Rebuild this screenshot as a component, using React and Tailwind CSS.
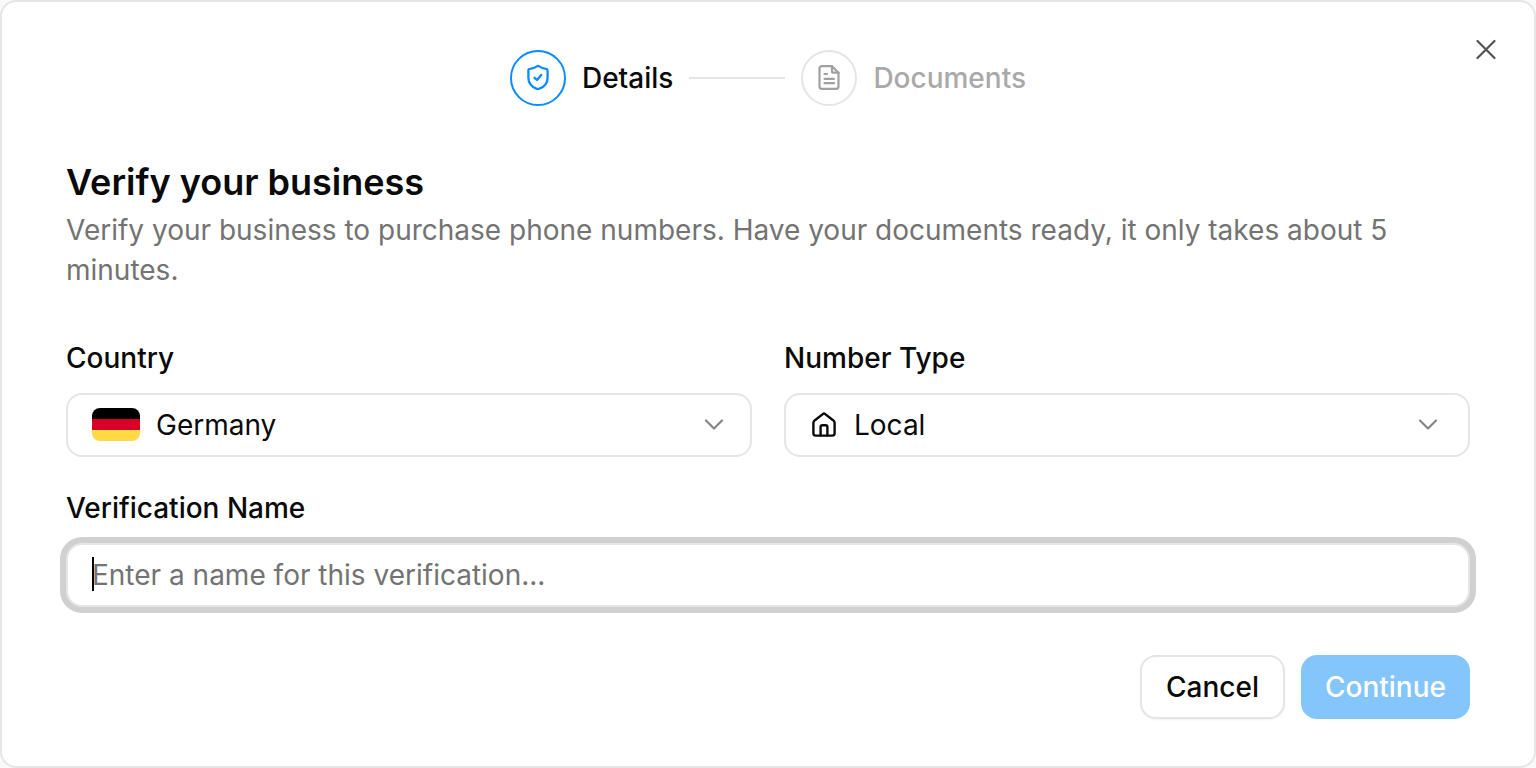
import React from "react";
import clsx from "clsx";

const strokeProps = {
  fill: "none",
  stroke: "currentColor",
  strokeWidth: 2,
  strokeLinecap: "round",
  strokeLinejoin: "round",
  "aria-hidden": true,
};

const ShieldIcon = () => (
  <svg viewBox="0 0 28 28" className="w-7 h-7" {...strokeProps} strokeWidth={2.3}>
    <path d="M12.8 2.4C13.5 1.9 14.5 1.9 15.2 2.4C17 3.7 19 4.5 22 4.9C23 5 23.6 5.6 23.6 6.5V13.4C23.6 19.6 20.2 22.8 15.2 24.8C14.4 25.1 13.6 25.1 12.8 24.8C7.8 22.8 4.4 19.6 4.4 13.4V6.5C4.4 5.6 5 5 6 4.9C9 4.5 11 3.7 12.8 2.4Z" />
    <path d="M10.5 13.8L13 16L17.3 11" />
  </svg>
);

const DocumentIcon = () => (
  <svg viewBox="0 0 28 28" className="w-7 h-7" {...strokeProps} strokeWidth={2.2}>
    <path d="M17 2.2H6.8C5.5 2.2 4.5 3.2 4.5 4.5V22.5C4.5 23.8 5.5 24.8 6.8 24.8H21.2C22.5 24.8 23.5 23.8 23.5 22.5V8.7L17 2.2Z" />
    <path d="M17 2.2V7.2C17 8 17.7 8.7 18.5 8.7H23.5" />
    <path d="M9.5 10H12M9.5 14.8H19M9.5 19.2H19" />
  </svg>
);

const HomeIcon = () => (
  <svg viewBox="0 0 28 28" className="w-7 h-7" {...strokeProps} strokeWidth={2.4}>
    <path d="M3.4 11.7C3.4 10.9 3.7 10.3 4.3 9.8L12.8 3.1C13.5 2.5 14.5 2.5 15.2 3.1L23.7 9.8C24.3 10.3 24.6 10.9 24.6 11.7V22.2C24.6 23.6 23.5 24.6 22.2 24.6H5.8C4.5 24.6 3.4 23.6 3.4 22.2V11.7Z" />
    <path d="M10.6 24.6V16C10.6 15 11.4 14.3 12.3 14.3H15.7C16.6 14.3 17.4 15 17.4 16V24.6" />
  </svg>
);

const ChevronIcon = ({ className }) => (
  <svg viewBox="0 0 24 24" className={clsx("absolute top-5 w-6 h-6 text-[#858585] pointer-events-none", className)} {...strokeProps} strokeWidth={2.2}>
    <path d="M4 7.5L12 15.5L20 7.5" />
  </svg>
);

const CloseIcon = () => (
  <svg viewBox="0 0 32 32" className="w-8 h-8" {...strokeProps} strokeWidth={2.2}>
    <path d="M7.5 7L24.5 24M24.5 7L7.5 24" />
  </svg>
);

const GermanFlag = () => (
  <svg viewBox="0 0 48 33" className="w-12 h-[33px] rounded-lg" aria-hidden="true">
    <rect width="48" height="11" fill="#000" />
    <rect y="11" width="48" height="11" fill="#d80027" />
    <rect y="22" width="48" height="11" fill="#ffda44" />
  </svg>
);

const Step = ({ icon, label, active }) => (
  <li className="flex items-center gap-4" aria-current={active ? "step" : undefined}>
    <span className={clsx("flex items-center justify-center w-14 h-14 rounded-full border-2", active ? "border-[#0a8cff] text-[#0a8cff]" : "border-[#e5e5e5] text-[#a1a1a1]")}>
      {icon}
    </span>
    <span className={clsx("font-medium", active ? "text-neutral-950" : "text-[#a9a9a9]")}>{label}</span>
  </li>
);

const Field = ({ id, label, children }) => (
  <div className="flex flex-col gap-4">
    <label htmlFor={id} className="font-medium leading-[38px]">{label}</label>
    <div className="relative">{children}</div>
  </div>
);

const selectClass = "block w-full h-16 pr-16 rounded-2xl border-2 border-[#e5e5e5] bg-white appearance-none outline-none";

const App = () => {
  return (
    <div className="min-h-screen flex bg-neutral-50 text-neutral-950 text-[28px] leading-10 font-[Inter,sans-serif]">
      <div role="dialog" aria-labelledby="title" className="relative flex-1 px-16 pt-12 pb-11 bg-white border-2 border-[#e5e5e5] rounded-2xl">
        <button type="button" aria-label="Close" className="absolute top-8 right-8 text-[#525252]">
          <CloseIcon />
        </button>

        <ol className="flex items-center justify-center gap-4">
          <Step icon={<ShieldIcon />} label="Details" active />
          <li aria-hidden="true" className="w-24 h-[2px] bg-[#e5e5e5]" />
          <Step icon={<DocumentIcon />} label="Documents" />
        </ol>

        <h1 id="title" className="mt-14 text-4xl leading-10 font-semibold">Verify your business</h1>
        <p className="mt-2 text-[#737373]">
          Verify your business to purchase phone numbers. Have your documents ready, it only takes about 5 minutes.
        </p>

        <form className="mt-[49px] flex flex-col gap-8" onSubmit={(e) => e.preventDefault()}>
          <div className="grid grid-cols-2 gap-8">
            <Field id="country" label="Country">
              <select id="country" defaultValue="Germany" className={clsx(selectClass, "pl-[88px]")}>
                <option>Germany</option>
              </select>
              <span className="absolute left-[26px] top-[15px] pointer-events-none"><GermanFlag /></span>
              <ChevronIcon className="right-[26px]" />
            </Field>
            <Field id="type" label="Number Type">
              <select id="type" defaultValue="Local" className={clsx(selectClass, "pl-[68px]")}>
                <option>Local</option>
              </select>
              <span className="absolute left-[26px] top-[18px] pointer-events-none"><HomeIcon /></span>
              <ChevronIcon className="right-[30px]" />
            </Field>
          </div>

          <Field id="name" label="Verification Name">
            <input
              id="name"
              type="text"
              placeholder="Enter a name for this verification..."
              className="block w-full h-16 px-6 rounded-2xl border-2 border-[#e5e5e5] bg-white ring-6 ring-[#d0d0d0] outline-none caret-transparent placeholder:text-[#737373]"
            />
            <span aria-hidden="true" className="absolute left-[26px] top-[14px] w-[2px] h-[34px] bg-black pointer-events-none" />
          </Field>

          <div className="mt-4 flex justify-end gap-4 font-medium">
            <button type="button" className="h-16 px-6 rounded-2xl border-2 border-[#e5e5e5] bg-white shadow-xs">Cancel</button>
            <button type="submit" disabled className="h-16 px-6 rounded-2xl bg-[#84c5fc] text-white">Continue</button>
          </div>
        </form>
      </div>
    </div>
  );
};

export default App;
